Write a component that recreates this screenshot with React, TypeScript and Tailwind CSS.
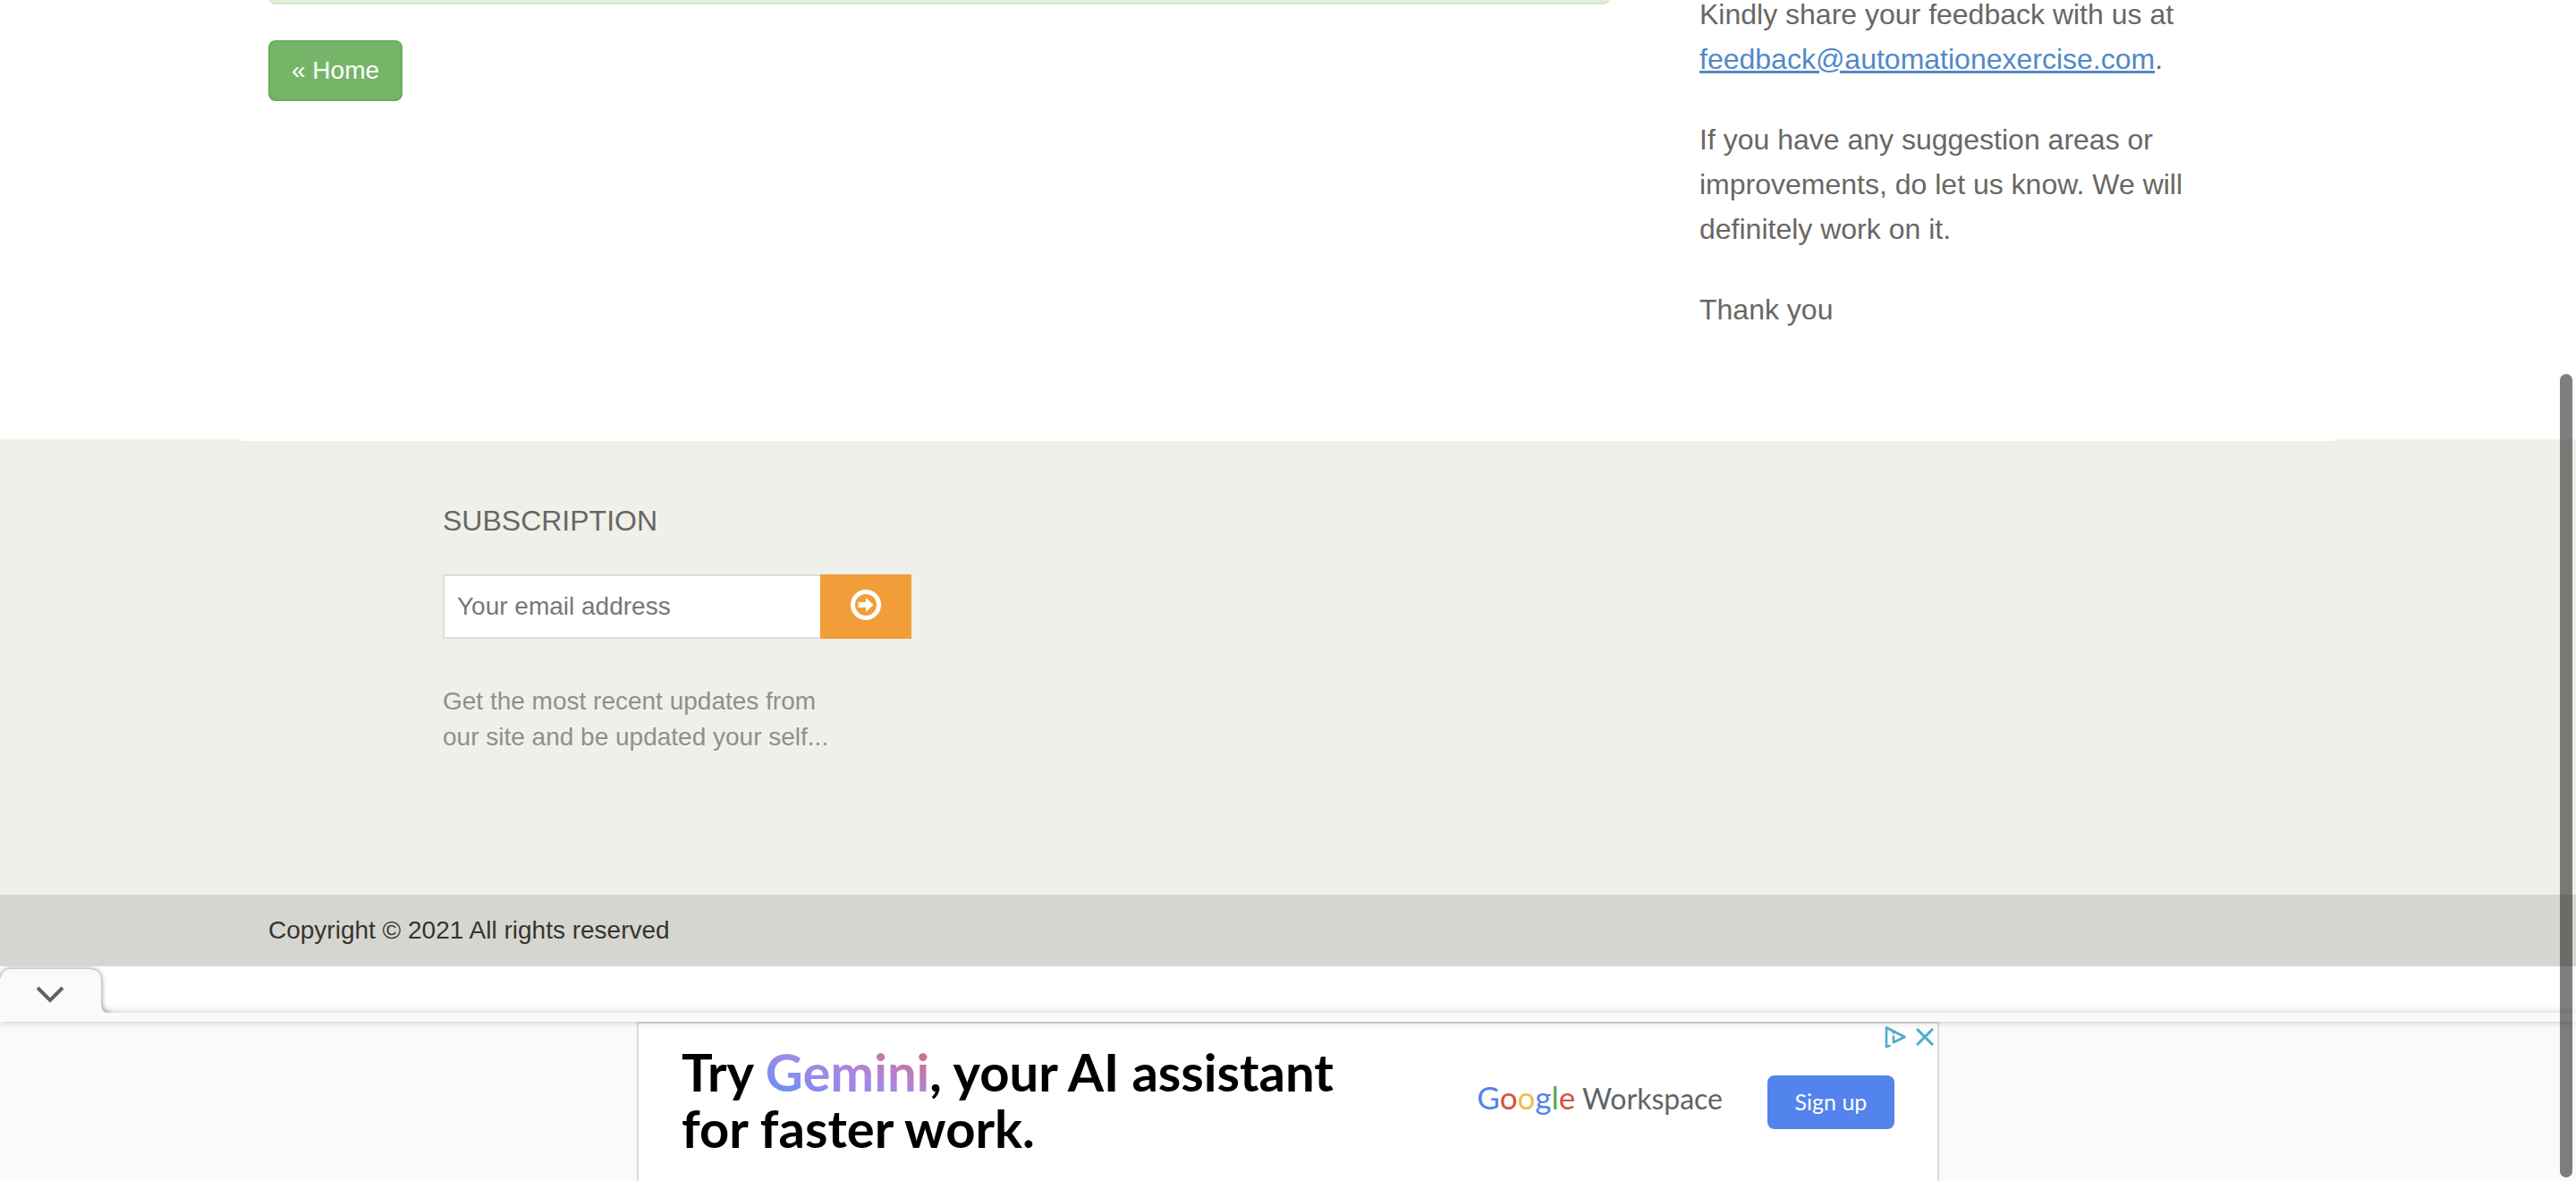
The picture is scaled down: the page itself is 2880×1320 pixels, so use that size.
function TabShape() {
  return (
    <svg
      className="pointer-events-none absolute bottom-0 left-0 overflow-visible"
      width="124"
      height="50"
      viewBox="0 0 124 50"
      aria-hidden="true"
    >
      <path
        className="drop-shadow-[0_0_3px_rgba(0,0,0,0.5)]"
        fill="#fafafa"
        d="M-4 60 V12 H0 Q3 1 12 1 H98 Q113 1 113 15 V40 Q113 50 122 50 V60 Z"
      />
      <path d="M42 22 L56 36 L70 22" fill="none" stroke="#616161" strokeWidth="4" />
    </svg>
  );
}

export default function App() {
  return (
    <div className='relative flex min-h-screen flex-col overflow-hidden bg-white font-["Liberation_Sans",Arial,sans-serif]'>
      <main className="mx-auto -mt-[9px] w-full max-w-[2340px] px-[30px]">
        <div className="grid min-h-[500px] grid-cols-[2fr_1fr] gap-[30px]">
          <section>
            <div className="h-[14px] rounded-b-lg border-2 border-[#dbe8c9] bg-[#e2efdb]" />
            <a
              href="#home"
              className="mt-10 inline-flex h-[68px] items-center rounded-lg border-2 border-[#67ac5b] bg-[#76b567] px-6 text-[28px] leading-10 text-white"
            >
              « Home
            </a>
          </section>
          <section className="flex flex-col gap-10 px-[70px] text-[32px] leading-[50px] text-[#696763]">
            <p>
              Kindly share your feedback with us at{" "}
              <a href="mailto:feedback@automationexercise.com" className="text-[#5288c7] underline">
                feedback@automationexercise.com
              </a>
              .
            </p>
            <p>If you have any suggestion areas or improvements, do let us know. We will definitely work on it.</p>
            <p>Thank you</p>
          </section>
        </div>
      </main>

      <footer>
        <div className="bg-[#f0f0ea] pb-[156px]">
          <div className="mx-auto w-full max-w-[2340px]">
            <div className="h-0.5 bg-white" />
            <div className="pl-[225px] pt-16">
              <h2 className="text-[32px] leading-[50px] text-[#696763]">SUBSCRIPTION</h2>
              <form className="mt-[35px] flex h-[72px]" onSubmit={(e) => e.preventDefault()}>
                <input
                  type="email"
                  aria-label="Your email address"
                  placeholder="Your email address"
                  className="w-[422px] border-2 border-r-0 border-[#dddddd] bg-white px-3.5 text-[28px] text-[#555555] outline-none placeholder:text-[#777777]"
                />
                <button
                  type="submit"
                  aria-label="Subscribe"
                  className="flex w-[102px] items-center justify-center bg-[#f19e3a] pb-1"
                >
                  <svg width="34" height="34" viewBox="0 0 34 34" aria-hidden="true">
                    <circle cx="17" cy="17" r="14.5" fill="none" stroke="#fff" strokeWidth="5" />
                    <path d="M8.5 14 H17 V9 L25.5 17 L17 25 V20 H8.5 Z" fill="#fff" />
                  </svg>
                </button>
              </form>
              <p className="mt-[50px] text-[28px] leading-10 text-[#8f908a]">
                Get the most recent updates from
                <br />
                our site and be updated your self...
              </p>
            </div>
          </div>
        </div>
        <div className="bg-[#d6d6d0]">
          <p className="mx-auto w-full max-w-[2340px] px-[30px] text-[28px] leading-[80px] text-[#363432]">
            Copyright © 2021 All rights reserved
          </p>
        </div>
      </footer>

      <aside aria-label="Advertisement" className="flex flex-1 flex-col">
        <div className="pt-0.5">
          <button
            type="button"
            aria-label="Hide advertisement"
            className="relative z-20 block h-[50px] w-[124px] [clip-path:inset(-2px_-10px_0_0)]"
          >
            <TabShape />
          </button>
        </div>
        <div className="relative z-10 h-2.5 bg-[#fafafa] shadow-[0_0_10px_rgba(0,0,0,0.22)]" />
        <div className="flex flex-1 justify-center bg-[#fafafa]">
          <div className="relative flex w-[1456px] justify-between border-2 border-b-0 border-[#dcdcdc] bg-white px-12">
            <p className='pt-[22px] font-["Lato",sans-serif] text-[58px] font-bold leading-[63px] text-black'>
              Try{" "}
              <span className="bg-linear-to-tr from-[#4f8ff7] via-[#a988e4] to-[#d95d63] bg-clip-text text-transparent">
                Gemini
              </span>
              , your AI assistant
              <br />
              for faster work.
            </p>
            <div className="flex items-start gap-[50px] pt-[58px]">
              <p className='whitespace-nowrap pt-0.5 font-["Lato",sans-serif] text-[32px] leading-[44px] text-[#5f6368]'>
                <span className="text-[35px]">
                  <span className="text-[#5383ec]">G</span>
                  <span className="text-[#d85140]">o</span>
                  <span className="text-[#f1bf42]">o</span>
                  <span className="text-[#5383ec]">g</span>
                  <span className="text-[#58a65c]">l</span>
                  <span className="text-[#d85140]">e</span>
                </span>{" "}
                Workspace
              </p>
              <a
                href="#signup"
                className='flex h-[60px] w-[142px] items-center justify-center rounded-lg bg-[#5383ec] font-["Lato",sans-serif] text-[25px] text-white'
              >
                Sign up
              </a>
            </div>
            <div className="absolute right-1 top-0 flex h-[30px] items-center gap-2.5">
              <button type="button" aria-label="Ad choices">
                <svg width="26" height="26" viewBox="0 0 26 26" fill="none" stroke="#4eabcb" aria-hidden="true">
                  <path d="M7.5 22.5 L3 24 V2.5 L23.500 13 L11 19 V11.500" strokeWidth="2.6" strokeLinejoin="round" />
                  <path d="M11 7 V9.500" strokeWidth="2.8" />
                </svg>
              </button>
              <button type="button" aria-label="Close advertisement">
                <svg width="20" height="20" viewBox="0 0 20 20" fill="none" stroke="#4eabcb" strokeWidth="3" aria-hidden="true">
                  <path d="M1 1 L19 19 M19 1 L1 19" />
                </svg>
              </button>
            </div>
          </div>
        </div>
      </aside>

      <div className="absolute bottom-1 right-1 z-30 h-[898px] w-3.5 rounded-full bg-black/50" />
    </div>
  );
}
